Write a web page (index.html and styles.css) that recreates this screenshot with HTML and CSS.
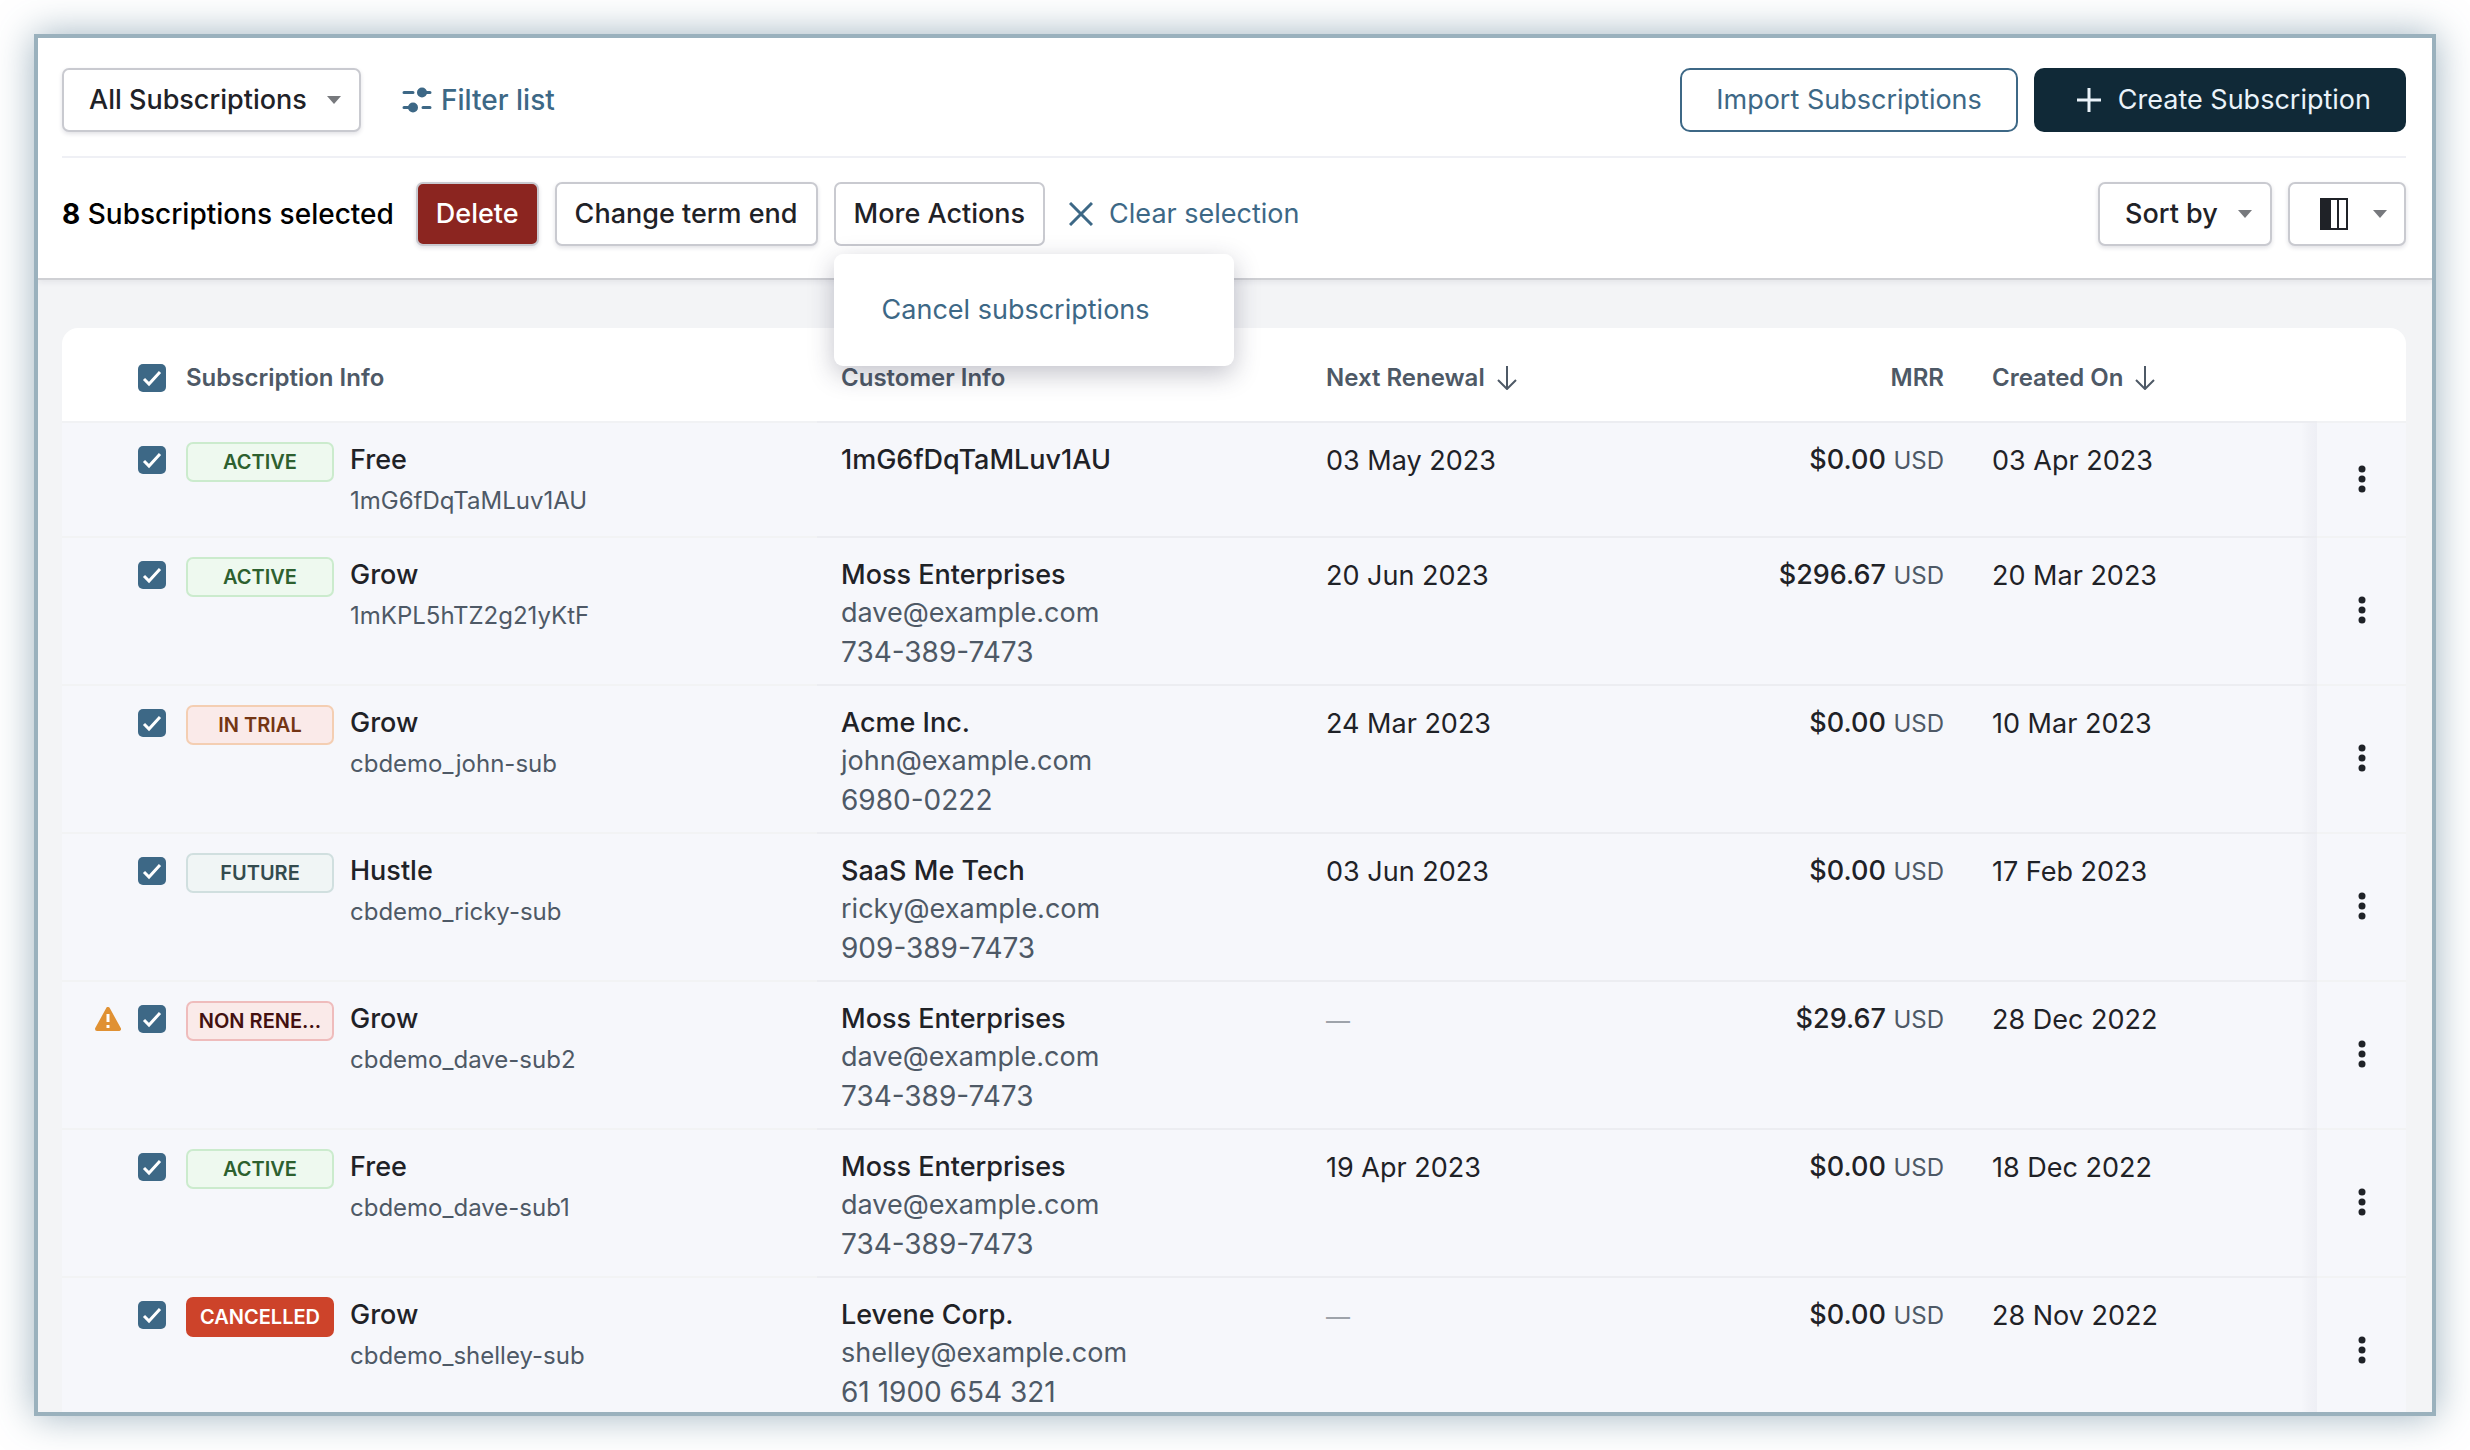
FILE: index.html
```html
<!DOCTYPE html>
<html lang="en">
<head>
  <meta charset="UTF-8">
  <meta name="viewport" content="width=device-width, initial-scale=1.0">
  <title>Subscriptions</title>
  <link rel="stylesheet" href="styles.css">
</head>
<body>
  <main class="frame">
    <header class="header">
      <div class="bar top-bar">
        <div class="select">
          <select aria-label="View"><option>All Subscriptions</option></select>
          <svg class="caret" viewBox="0 0 14 8"><path d="M0 0h14L7 8z"/></svg>
        </div>
        <button class="link filter">
          <svg width="30" height="26" viewBox="0 0 30 26" fill="currentColor" stroke="currentColor" stroke-width="3" stroke-linecap="round">
            <path d="M2 5.500h9M17 5.500h11M2 20.500h9M21 20.500h7"/>
            <circle cx="20" cy="5.500" r="3.500"/>
            <circle cx="11" cy="20.500" r="3.500"/>
          </svg>
          Filter list
        </button>
        <div class="right">
          <button class="outline">Import Subscriptions</button>
          <button class="primary">
            <svg width="24" height="24" viewBox="0 0 24 24" fill="none" stroke="currentColor" stroke-width="3"><path d="M12 0v24M0 12h24"/></svg>
            Create Subscription
          </button>
        </div>
      </div>

      <div class="bar bulk-bar">
        <span class="selected"><strong>8</strong> Subscriptions selected</span>
        <div class="actions">
          <button class="btn danger">Delete</button>
          <button class="btn">Change term end</button>
          <div class="more">
            <button class="btn open" aria-expanded="true">More Actions</button>
            <div class="menu"><button>Cancel subscriptions</button></div>
          </div>
        </div>
        <button class="link clear">
          <svg width="24" height="24" viewBox="0 0 24 24" fill="none" stroke="currentColor" stroke-width="3"><path d="M1 1l22 22M23 1L1 23"/></svg>
          Clear selection
        </button>
        <div class="right">
          <div class="select">
            <select aria-label="Sort by"><option>Sort by</option></select>
            <svg class="caret" viewBox="0 0 14 8"><path d="M0 0h14L7 8z"/></svg>
          </div>
          <button class="btn columns" aria-label="Columns">
            <svg width="28" height="32" viewBox="0 0 28 32" fill="none" stroke="#1f2227" stroke-width="2">
              <rect x="1" y="1" width="26" height="30"/>
              <path d="M1 1h9v30H1z" fill="#1f2227"/>
              <path d="M18 1v30"/>
            </svg>
            <svg class="caret" viewBox="0 0 14 8"><path d="M0 0h14L7 8z"/></svg>
          </button>
        </div>
      </div>
    </header>

    <section class="list">
      <table>
        <colgroup>
          <col class="col-check">
          <col class="col-info">
          <col class="col-customer">
          <col>
          <col class="col-mrr">
          <col class="col-created">
          <col class="col-menu">
        </colgroup>
        <thead>
          <tr>
            <th class="check"><input type="checkbox" aria-label="Select all" checked></th>
            <th>Subscription Info</th>
            <th class="line">Customer Info</th>
            <th class="line">
              <button class="sort">Next Renewal
                <svg width="20" height="24" viewBox="0 0 20 24" fill="none" stroke="currentColor" stroke-width="2"><path d="M10 0v23M1 14l9 9 9-9"/></svg>
              </button>
            </th>
            <th class="line mrr">MRR</th>
            <th class="line created">
              <button class="sort">Created On
                <svg width="20" height="24" viewBox="0 0 20 24" fill="none" stroke="currentColor" stroke-width="2"><path d="M10 0v23M1 14l9 9 9-9"/></svg>
              </button>
            </th>
            <th></th>
          </tr>
        </thead>
        <tbody id="rows"></tbody>
      </table>
    </section>
  </main>

  <script>
    const subscriptions = [
      { status: "ACTIVE", type: "active", plan: "Free", id: "1mG6fDqTaMLuv1AU", customer: "1mG6fDqTaMLuv1AU", renewal: "03 May 2023", mrr: "$0.00", created: "03 Apr 2023" },
      { status: "ACTIVE", type: "active", plan: "Grow", id: "1mKPL5hTZ2g21yKtF", customer: "Moss Enterprises", email: "dave@example.com", phone: "734-389-7473", renewal: "20 Jun 2023", mrr: "$296.67", created: "20 Mar 2023" },
      { status: "IN TRIAL", type: "trial", plan: "Grow", id: "cbdemo_john-sub", customer: "Acme Inc.", email: "john@example.com", phone: "6980-0222", renewal: "24 Mar 2023", mrr: "$0.00", created: "10 Mar 2023" },
      { status: "FUTURE", type: "future", plan: "Hustle", id: "cbdemo_ricky-sub", customer: "SaaS Me Tech", email: "ricky@example.com", phone: "909-389-7473", renewal: "03 Jun 2023", mrr: "$0.00", created: "17 Feb 2023" },
      { status: "NON RENE...", type: "non-renewing", warning: true, plan: "Grow", id: "cbdemo_dave-sub2", customer: "Moss Enterprises", email: "dave@example.com", phone: "734-389-7473", mrr: "$29.67", created: "28 Dec 2022" },
      { status: "ACTIVE", type: "active", plan: "Free", id: "cbdemo_dave-sub1", customer: "Moss Enterprises", email: "dave@example.com", phone: "734-389-7473", renewal: "19 Apr 2023", mrr: "$0.00", created: "18 Dec 2022" },
      { status: "CANCELLED", type: "cancelled", plan: "Grow", id: "cbdemo_shelley-sub", customer: "Levene Corp.", email: "shelley@example.com", phone: "61 1900 654 321", mrr: "$0.00", created: "28 Nov 2022" }
    ];

    const warningIcon = `<svg class="warning" width="26" height="24" viewBox="0 0 26 24">
      <path d="M13 2L24 22H2z" fill="#e09133" stroke="#e09133" stroke-width="4" stroke-linejoin="round"/>
      <path d="M13 7v8M13 18v3" stroke="#fff" stroke-width="3"/></svg>`;

    document.getElementById("rows").innerHTML = subscriptions.map(s => `
      <tr>
        <td class="check"><div>${s.warning ? warningIcon : ""}<input type="checkbox" aria-label="Select ${s.id}" checked></div></td>
        <td>
          <div class="info">
            <span class="badge ${s.type}">${s.status}</span>
            <div>
              <div class="name">${s.plan}</div>
              <div class="sub-id">${s.id}</div>
            </div>
          </div>
        </td>
        <td class="line">
          <div class="name">${s.customer}</div>
          ${s.email ? `<div class="email">${s.email}</div><div class="phone">${s.phone}</div>` : ""}
        </td>
        <td class="line date">${s.renewal || '<span class="none">—</span>'}</td>
        <td class="line mrr"><span class="name">${s.mrr}</span> <span class="currency">USD</span></td>
        <td class="line created date">${s.created}</td>
        <td class="row-menu">
          <button aria-label="Actions">
            <svg width="8" height="28" viewBox="0 0 8 28" fill="#1f2227"><circle cx="4" cy="4" r="3.500"/><circle cx="4" cy="14" r="3.500"/><circle cx="4" cy="24" r="3.500"/></svg>
          </button>
        </td>
      </tr>`).join("");
  </script>
</body>
</html>
```
FILE: styles.css
```css
* { box-sizing: border-box; }
body { margin: 0; padding: 34px; height: 100vh; overflow: hidden; background: #fff; color: #1f2227; font-family: Inter, sans-serif; font-size: 27px; line-height: 38px; }
button, select { font: inherit; color: inherit; cursor: pointer; }
button { display: flex; align-items: center; justify-content: center; background: none; border: none; padding: 0; white-space: nowrap; }

.frame { height: 100%; overflow: hidden; background: #f3f4f6; border: 4px solid #9ab1bd; box-shadow: 0 0 36px rgba(64, 104, 130, 0.5); }

/* header */
.header { position: relative; z-index: 1; background: #fff; padding: 30px 26px 32px 24px; border-bottom: 2px solid #cfd0d4; box-shadow: 0 2px 6px rgba(40, 40, 70, 0.08); }
.bar { display: flex; align-items: center; }
.top-bar { padding-bottom: 24px; border-bottom: 2px solid #eff0f5; }
.bulk-bar { padding-top: 24px; }
.right { display: flex; gap: 16px; margin-left: auto; }
.actions { display: flex; gap: 16px; margin: 0 24px 0 22px; }

.btn, select { height: 64px; background: #fff; border: 2px solid #c9cad0; border-radius: 7px; box-shadow: 0 2px 4px rgba(40, 40, 70, 0.14); font-weight: 500; }
.btn { padding: 0 18px; }
.danger { background: #8b2520; color: #fff; }
.open { box-shadow: none; }
.select { display: grid; align-items: center; }
.select > * { grid-area: 1 / 1; }
select { appearance: none; padding: 0 52px 0 25px; }
.caret { width: 14px; height: 8px; fill: #77797d; }
.select .caret { justify-self: end; margin-right: 20px; pointer-events: none; }
.columns { gap: 25px; padding: 0 17px 0 30px; }

.link { color: #3d6886; }
.filter { gap: 9px; margin-left: 41px; font-size: 28px; font-weight: 500; }
.clear { gap: 16px; }
.outline, .primary { height: 64px; border-radius: 10px; }
.outline { padding: 0 34px; border: 2px solid #3d6886; color: #3d6886; }
.primary { gap: 17px; padding: 0 35px 0 43px; background: #102937; color: #eaf3fa; }

.selected { color: #000; font-size: 28px; font-weight: 500; }
.selected strong { font-weight: 700; }

.more { position: relative; }
.menu { position: absolute; top: 72px; left: 0; width: 400px; padding: 37px 48px; background: #fff; border-radius: 9px; box-shadow: 0 8px 26px rgba(40, 40, 70, 0.28); }
.menu button { color: #3d6886; }

/* list */
.list { padding: 48px 26px 0 24px; }
table { width: 100%; table-layout: fixed; border-collapse: separate; border-spacing: 0; }
.col-check { width: 124px; }
.col-info { width: 631px; }
.col-customer { width: 485px; }
.col-mrr { width: 300px; }
.col-created { width: 349px; }
.col-menu { width: 89px; }

th { height: 95px; padding: 7px 0 0; background: #fff; border-bottom: 2px solid #f1f2f4; color: #4e5966; font-size: 24px; font-weight: 600; text-align: left; }
th:first-child { border-top-left-radius: 16px; }
th:last-child { border-top-right-radius: 16px; }
.sort { gap: 12px; font-weight: 600; }

tbody tr { height: 115px; }
td { padding: 18px 0 12px; background: #f6f7fb; border-bottom: 2px solid #f2f3f4; vertical-align: top; }
.line { padding-left: 24px; border-bottom-color: #ecedf1; }
td.created { background: linear-gradient(to left, #eeeff5, #f1f2f7 8px, #f6f7fb 16px); }

.check { padding-right: 20px; }
td.check { padding-top: 23px; }
td.check div { display: flex; align-items: center; justify-content: flex-end; gap: 17px; }
th.check input { display: block; margin-left: auto; }
input[type="checkbox"] { appearance: none; width: 28px; height: 28px; margin: 0; border-radius: 5px; background: #3d6886 url("data:image/svg+xml,%3Csvg xmlns='http://www.w3.org/2000/svg' viewBox='0 0 28 28'%3E%3Cpath d='M6 15l5 5L22 8' fill='none' stroke='white' stroke-width='3'/%3E%3C/svg%3E"); }

.info { display: flex; align-items: flex-start; gap: 16px; }
.badge { width: 148px; height: 40px; margin-top: 1px; border: 2px solid; border-radius: 7px; font-size: 20px; font-weight: 600; line-height: 37px; text-align: center; white-space: nowrap; }
.active { background: #eef9ef; border-color: #cbebcd; color: #2d602f; }
.trial { background: #faeae9; border-color: #f4ceb2; color: #743514; }
.future { background: #f0f5f5; border-color: #d0dfdf; color: #334b4e; }
.non-renewing { background: #faeae9; border-color: #efbcbc; color: #431010; }
.cancelled { background: #cd432a; border-color: #cd432a; color: #fff; }

.name { font-weight: 500; }
.sub-id { color: #4e5966; font-size: 24px; line-height: 44px; }
.email { color: #4e5966; }
.phone { color: #4e5966; font-size: 28px; line-height: 40px; }
.date { line-height: 40px; }
.none { color: #9ea3aa; font-size: 24px; }
.mrr { padding-right: 24px; text-align: right; }
.currency { color: #4e5966; font-size: 24px; }

.row-menu { padding: 10px 0 12px; vertical-align: middle; }
.row-menu button { width: 100%; height: 64px; }
```
